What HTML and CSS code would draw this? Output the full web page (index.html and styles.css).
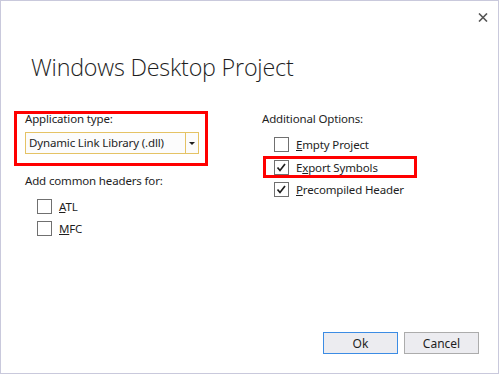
FILE: index.html
```html
<!DOCTYPE html>
<html lang="en">
<head>
    <meta charset="UTF-8">
    <title>Windows Desktop Project</title>
    <link rel="stylesheet" href="styles.css">
</head>
<body>
    <div class="dialog">
        <div class="titlebar">
            <button class="close" title="Close">
                <svg width="10" height="9" viewBox="0 0 10 9">
                    <path d="M1 0.5 L9 8.5 M9 0.5 L1 8.5" stroke="#555" stroke-width="1.6" fill="none"/>
                </svg>
            </button>
        </div>
        <h1>Windows Desktop Project</h1>

        <div class="columns">
            <div class="col left">
                <div class="highlight combo-group">
                    <div class="label first">Application type:</div>
                    <div class="combo">
                        <span class="combo-value">Dynamic Link Library (.dll)</span>
                        <span class="combo-arrow"><span class="triangle"></span></span>
                    </div>
                </div>
                <div class="label section">Add common headers for:</div>
                <div class="checks">
                    <div class="check"><span class="box"></span><span><u>A</u>TL</span></div>
                    <div class="check"><span class="box"></span><span><u>M</u>FC</span></div>
                </div>
            </div>

            <div class="col right">
                <div class="label">Additional Options:</div>
                <div class="checks">
                    <div class="check"><span class="box"></span><span><u>E</u>mpty Project</span></div>
                    <div class="check highlight marked">
                        <span class="box">
                            <svg width="13" height="13" viewBox="0 0 13 13"><path d="M2.5 6.5 L5 9.5 L10 3" stroke="#1e1e1e" stroke-width="1.7" fill="none"/></svg>
                        </span>
                        <span>E<u>x</u>port Symbols</span>
                    </div>
                    <div class="check">
                        <span class="box">
                            <svg width="13" height="13" viewBox="0 0 13 13"><path d="M2.5 6.5 L5 9.5 L10 3" stroke="#1e1e1e" stroke-width="1.7" fill="none"/></svg>
                        </span>
                        <span><u>P</u>recompiled Header</span>
                    </div>
                </div>
            </div>
        </div>

        <div class="footer">
            <button class="btn default">Ok</button>
            <button class="btn">Cancel</button>
        </div>
    </div>
</body>
</html>
```
FILE: styles.css
```css
body {
    margin: 0;
    background: white;
    font-family: "Noto Sans", "Open Sans", sans-serif;
    font-size: 11.5px;
    letter-spacing: -0.15px;
    color: #1e1e1e;
}
.dialog {
    width: 499px;
    height: 374px;
    box-sizing: border-box;
    border: 1px solid #c9c9dc;
    display: flex;
    flex-direction: column;
    background: white;
}
.titlebar {
    height: 50px;
    box-sizing: border-box;
    display: flex;
    justify-content: flex-end;
    padding: 12px 10px 0 0;
}
.close {
    border: none;
    background: none;
    padding: 0;
    width: 10px;
    height: 9px;
    display: block;
}
.close svg {
    display: block;
}
h1 {
    margin: 0 0 0 30px;
    font-family: "Open Sans", "Noto Sans", sans-serif;
    font-size: 23.3px;
    font-weight: 300;
    letter-spacing: -0.2px;
    line-height: 32px;
    height: 32px;
    color: #1e1e1e;
}
.columns {
    display: flex;
    margin-top: 28px;
    padding-left: 13px;
}
.col.left {
    width: 194px;
}
.col.right {
    margin-left: 54px;
}
.label {
    line-height: 16px;
    white-space: nowrap;
}
.highlight {
    border: 3px solid #ff0000;
    box-sizing: border-box;
}
.combo-group {
    padding: 0 6px 9px 8px;
}
.label.first {
    margin-top: -3px;
}
.combo {
    margin-top: 5px;
    width: 174px;
    height: 22px;
    box-sizing: border-box;
    border: 1px solid #e5c365;
    background: #fcfcfc;
    display: flex;
}
.combo-value {
    flex: 1;
    padding-left: 3px;
    line-height: 20px;
    white-space: nowrap;
}
.combo-arrow {
    width: 12px;
    border-left: 1px solid #e5c365;
    display: flex;
    align-items: center;
    justify-content: center;
}
.triangle {
    width: 0;
    height: 0;
    border-left: 3px solid transparent;
    border-right: 3px solid transparent;
    border-top: 3px solid #1e1e1e;
}
.col.left > .label.section {
    margin: 7px 0 0 11px;
}
.checks {
    margin-top: 6px;
    padding-left: 12px;
}
.col.left > .checks {
    padding-left: 23px;
}
.check {
    display: flex;
    align-items: center;
    height: 22px;
    white-space: nowrap;
}
.box {
    width: 15px;
    height: 15px;
    box-sizing: border-box;
    border: 1px solid #707070;
    background: white;
    margin-right: 7px;
    display: flex;
    align-items: center;
    justify-content: center;
}
.box svg {
    display: block;
}
.check.marked {
    width: 154px;
    margin: 1px 0 0 -11px;
    padding-left: 8px;
}
.footer {
    margin-top: auto;
    display: flex;
    justify-content: flex-end;
    gap: 6px;
    padding: 0 19px 19px 0;
}
.btn {
    width: 75px;
    height: 22px;
    box-sizing: border-box;
    border: 1px solid #acacac;
    background: #ececf0;
    font-family: "Noto Sans", "Open Sans", sans-serif;
    font-size: 12px;
    color: #1e1e1e;
    padding: 0;
}
.btn.default {
    border-color: #3c8ce4;
}
```
